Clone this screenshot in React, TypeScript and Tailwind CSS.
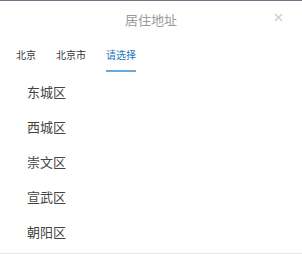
import React from "react"

const tabs = [
  { label: "北京", active: false },
  { label: "北京市", active: false },
  { label: "请选择", active: true },
]

const districts = ["东城区", "西城区", "崇文区", "宣武区", "朝阳区"]

export default function App() {
  return (
    <div
      className="w-[302px] h-[254px] overflow-hidden bg-white border-t border-b border-t-[#73758a] border-b-[#e6e6e6] flex flex-col"
      style={{ fontFamily: '"Noto Sans CJK SC", "Noto Sans", sans-serif' }}
    >
      {/* Header */}
      <div className="relative h-[36px] flex items-center justify-center">
        <span className="text-[13px] leading-none text-[#9a9a9a]">居住地址</span>
        <button className="absolute right-[19px] top-[12px] text-[#d0d0d0]">
          <svg width="9" height="9" viewBox="0 0 9 9">
            <path d="M1 1 L8 8 M8 1 L1 8" stroke="currentColor" strokeWidth="1.6" />
          </svg>
        </button>
      </div>

      {/* Tabs */}
      <div className="flex gap-5 pl-4 mt-[8px]">
        {tabs.map((t) => (
          <div key={t.label} className="flex flex-col">
            <span
              className={`text-[10px] leading-[20px] ${t.active ? "text-[#1f74bd]" : "text-[#333]"}`}
            >
              {t.label}
            </span>
            <div className={`mt-[5px] h-[2px] ${t.active ? "bg-[#6aa8dc]" : "bg-transparent"}`} />
          </div>
        ))}
      </div>

      {/* List */}
      <ul className="mt-[2px] pl-[27px]">
        {districts.map((d) => (
          <li key={d} className="h-[35px] flex items-center text-[13px] text-[#444]">
            {d}
          </li>
        ))}
      </ul>
    </div>
  )
}
